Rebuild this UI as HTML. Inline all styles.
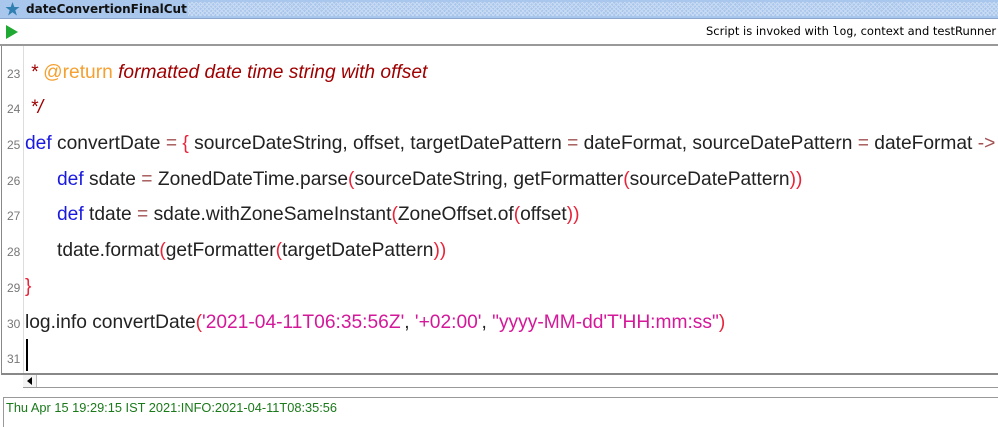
<!DOCTYPE html>
<html><head><style>
body{margin:0;width:998px;height:426px;background:#fff;position:relative;overflow:hidden;font-family:"Liberation Sans",sans-serif}
.title{position:absolute;left:0;top:0;width:998px;height:18px;background:#a9c6ec;border-bottom:1px solid #8aa6cc}
.pat{position:absolute;left:188px;top:2px;right:0;height:14px;background-image:repeating-linear-gradient(45deg,#c9dbf3 0 1px,transparent 1px 3px),repeating-linear-gradient(-45deg,#c9dbf3 0 1px,transparent 1px 3px)}
.ttxt{position:absolute;left:26px;top:0px;font-family:"DejaVu Sans",sans-serif;font-weight:bold;font-size:12px;line-height:18px;color:#111}
.tool{position:absolute;left:0;top:19px;width:998px;height:25px;border-bottom:2px solid #999;background:#fff}
.info{position:absolute;left:706px;top:5px;white-space:nowrap;font-family:"DejaVu Sans",sans-serif;font-size:11.5px;color:#000}
.ed{position:absolute;left:1px;top:46px;width:997px;height:327px;border-left:1px solid #888;border-bottom:2px solid #888}
.gut{position:absolute;left:0;top:0;width:21px;height:327px;border-right:1px solid #ddd}
.ln{position:absolute;left:5px;font-size:12px;color:#777}
.cl{position:absolute;left:23px;font-size:19.2px;color:#222;white-space:pre}
.k{color:#1a1adf}.p{color:#e8243a}.o{color:#a05050}.s{color:#d4189a}.c{color:#a00000;font-style:italic}.a{color:#f5a030}
.sb{position:absolute;left:23px;top:375px;width:975px;height:12px;border-bottom:1px solid #999}
.log{position:absolute;left:3px;top:397px;width:995px;height:29px;border-top:1px solid #999;border-left:1px solid #999}
</style></head><body>
<div class="title"><div class="pat"></div>
<svg style="position:absolute;left:5px;top:2px" width="15" height="14" viewBox="0 0 15 14"><polygon points="7.5,0 9.3,5 14.5,5 10.3,8.2 11.9,13.5 7.5,10.3 3.1,13.5 4.7,8.2 0.5,5 5.7,5" fill="#2f7fb0"/></svg>
<div class="ttxt">dateConvertionFinalCut</div></div>
<div class="tool"><svg style="position:absolute;left:6px;top:6px" width="12" height="14"><polygon points="0,0 12,7 0,14" fill="#1fa832"/></svg>
<div class="info">Script is invoked with <span style="font-family:'DejaVu Sans Mono',monospace">log</span>, context and testRunner</div></div>
<div class="ed"><div class="gut"></div>
<div class="ln" style="top:21px">23</div><div class="cl" style="top:16px"> <span class="c">* </span><span class="a">@return</span><span class="c"> formatted date time string with offset</span></div>
<div class="ln" style="top:56px">24</div><div class="cl" style="top:51px"> <span class="c">*/</span></div>
<div class="ln" style="top:92px">25</div><div class="cl" style="top:87px"><span class="k">def</span> convertDate <span class="o">=</span> <span class="p">{</span> sourceDateString, offset, targetDatePattern <span class="o">=</span> dateFormat, sourceDatePattern <span class="o">=</span> dateFormat <span class="o">-&gt;</span></div>
<div class="ln" style="top:128px">26</div><div class="cl" style="top:123px">      <span class="k">def</span> sdate <span class="o">=</span> ZonedDateTime.parse<span class="p">(</span>sourceDateString, getFormatter<span class="p">(</span>sourceDatePattern<span class="p">))</span></div>
<div class="ln" style="top:163px">27</div><div class="cl" style="top:158px">      <span class="k">def</span> tdate <span class="o">=</span> sdate.withZoneSameInstant<span class="p">(</span>ZoneOffset.of<span class="p">(</span>offset<span class="p">))</span></div>
<div class="ln" style="top:199px">28</div><div class="cl" style="top:194px">      tdate.format<span class="p">(</span>getFormatter<span class="p">(</span>targetDatePattern<span class="p">))</span></div>
<div class="ln" style="top:235px">29</div><div class="cl" style="top:230px"><span class="p">}</span></div>
<div class="ln" style="top:271px">30</div><div class="cl" style="top:266px">log.info convertDate<span class="p">(</span><span class="s">'2021-04-11T06:35:56Z'</span>, <span class="s">'+02:00'</span>, <span class="s">"yyyy-MM-dd'T'HH:mm:ss"</span><span class="p">)</span></div>
<div class="ln" style="top:306px">31</div><div style="position:absolute;left:24px;top:293px;width:2px;height:32px;background:#000"></div>
</div>
<div class="sb"><div style="position:absolute;left:0;top:0;width:13px;height:12px;border-right:1px solid #bbb;background:#f4f4f4"></div><svg style="position:absolute;left:4px;top:2px" width="6" height="8"><polygon points="5,0 0,4 5,8" fill="#000"/></svg></div>
<div class="log"><div style="position:absolute;left:2px;top:2px;font-size:12.8px;color:#1a7a1a">Thu Apr 15 19:29:15 IST 2021:INFO:2021-04-11T08:35:56</div></div>
</body></html>
